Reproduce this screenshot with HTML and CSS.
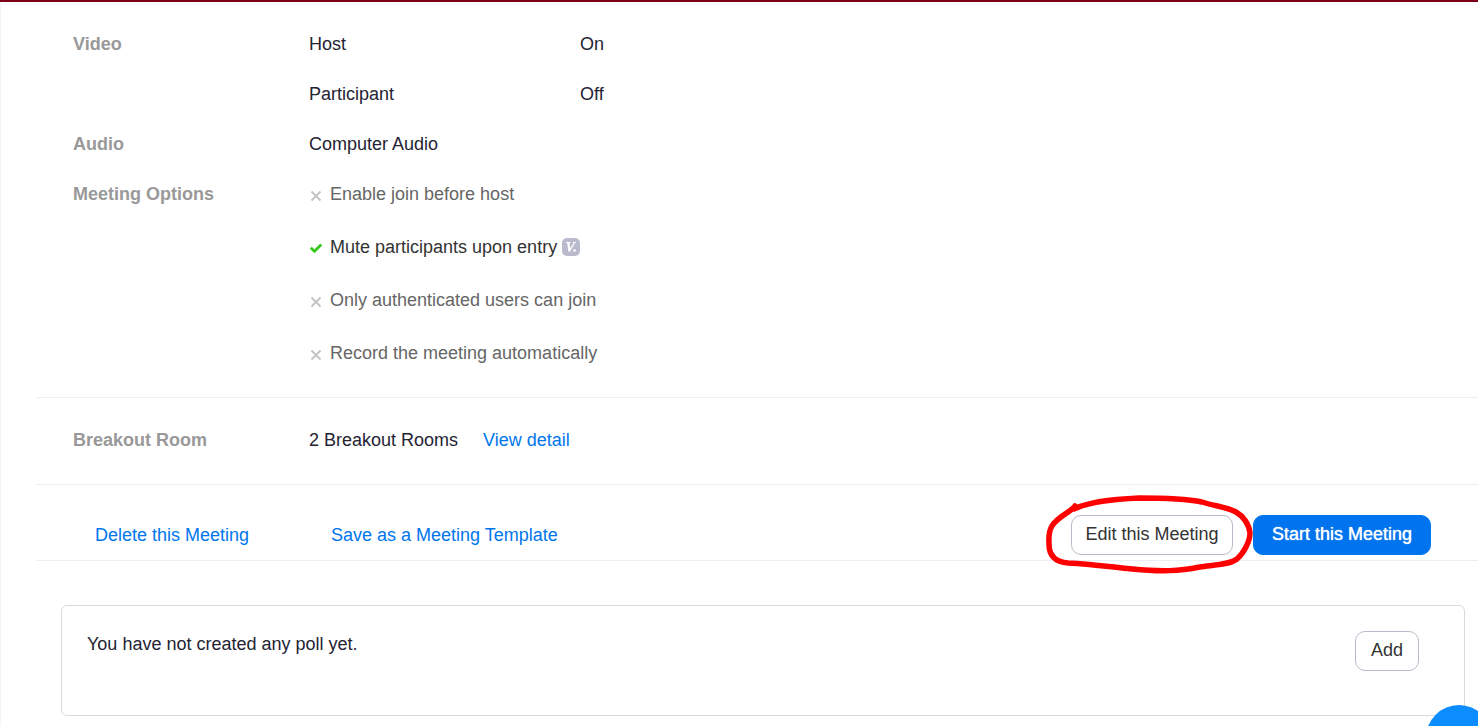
FILE: index.html
```html
<!DOCTYPE html>
<html lang="en">
<head>
<meta charset="utf-8">
<title>Meeting details</title>
<link rel="stylesheet" href="styles.css">
</head>
<body>
<svg class="sprite" aria-hidden="true">
  <symbol id="cross" viewBox="0 0 12 12"><path d="M1.500 1.500 10.500 10.500M10.500 1.500 1.500 10.500" fill="none" stroke="#c4c4c4" stroke-width="1.900"/></symbol>
</svg>
<main class="page">
  <section class="section details">
    <div class="row">
      <h2 class="label">Video</h2>
      <dl class="pairs">
        <dt>Host</dt><dd>On</dd>
        <dt>Participant</dt><dd>Off</dd>
      </dl>
    </div>
    <div class="row">
      <h2 class="label">Audio</h2>
      <p class="value">Computer Audio</p>
    </div>
    <div class="row">
      <h2 class="label">Meeting Options</h2>
      <ul class="options">
        <li class="option"><svg class="mark"><use href="#cross"/></svg>Enable join before host</li>
        <li class="option option-on"><svg class="mark" viewBox="0 0 12 12"><path d="M.8 4.800 4.500 8.300 11.300 1.500" fill="none" stroke="#35c91d" stroke-width="2.800"/></svg>Mute participants upon entry
          <svg class="badge" viewBox="0 0 18 18"><rect width="18" height="18" rx="5" fill="#babacf"/><path d="M4 4.500H8.500M11 4.500H14" fill="none" stroke="#fff" stroke-width="1.200"/><path d="M5.200 4.500H7.600L8 10.500 12 4.500H13.200L8 13.500H6.300Z" fill="#fff"/><circle cx="12.500" cy="12.500" r="1.300" fill="#fff"/></svg></li>
        <li class="option"><svg class="mark"><use href="#cross"/></svg>Only authenticated users can join</li>
        <li class="option"><svg class="mark"><use href="#cross"/></svg>Record the meeting automatically</li>
      </ul>
    </div>
  </section>
  <section class="section">
    <div class="row">
      <h2 class="label">Breakout Room</h2>
      <p class="value">2 Breakout Rooms <a class="detail" href="#">View detail</a></p>
    </div>
  </section>
  <section class="section actions">
    <a class="delete" href="#">Delete this Meeting</a>
    <a href="#">Save as a Meeting Template</a>
    <div class="buttons">
      <div class="circled">
        <button class="button edit" type="button">Edit this Meeting</button>
        <svg class="scribble" viewBox="0 0 220 90" aria-hidden="true"><path d="M35 16C31 22 17 27 12 36C8 42 9 48 9 54C9 65 15 72 28 73C48 74 73 77 92 79C123 82 139 81 160 77C173 75 189 75 197 69C204 63 210 51 210 43C209 34 203 26 196 22C187 17 174 16 162 12C142 8 119 8 99 8C76 9 50 11 34 19" fill="none" stroke="#fe0000" stroke-width="5.500" stroke-linecap="round" stroke-linejoin="round"/></svg>
      </div>
      <button class="button start" type="button">Start this Meeting</button>
    </div>
  </section>
  <section class="poll">
    <p class="poll-text">You have not created any poll yet.</p>
    <button class="button" type="button">Add</button>
  </section>
</main>
<button class="help" type="button" aria-label="Help"></button>
</body>
</html>
```
FILE: styles.css
```css
* {
  box-sizing: border-box;
}

body {
  margin: 0;
  border-top: 2px solid #7b0018;
  background: #fff;
  color: #232333;
  font: 18px/20px "Liberation Sans", Arial, sans-serif;
}

h2, p, dl, dd, ul {
  margin: 0;
  padding: 0;
}

a {
  color: #0076ee;
  text-decoration: none;
}

.sprite {
  display: none;
}

.page {
  padding: 0 0 10px 35px;
  border-left: 1px solid #f4f4f6;
}

.section {
  padding: 32px 0 34px 37px;
  border-bottom: 1px solid #ededf4;
}

.details {
  display: flex;
  flex-direction: column;
  gap: 30px;
}

.row {
  display: grid;
  grid-template-columns: 236px 1fr;
}

.label {
  color: #999;
  font-size: 18px;
  font-weight: bold;
}

.pairs {
  display: grid;
  grid-template-columns: 271px 1fr;
  row-gap: 30px;
}

.options {
  display: flex;
  flex-direction: column;
  gap: 33px;
  list-style: none;
}

.option {
  display: flex;
  align-items: center;
  color: #666;
}

.option-on {
  color: #333;
}

.mark {
  width: 12px;
  height: 12px;
  margin: 3px 8px 0 1px;
}

.badge {
  width: 18px;
  height: 18px;
  margin-left: 5px;
}

.detail {
  margin-left: 20px;
}

.actions {
  display: flex;
  align-items: center;
  padding: 30px 47px 5px 59px;
}

.delete {
  width: 236px;
}

.buttons {
  display: flex;
  gap: 20px;
  margin-left: auto;
}

.button {
  height: 40px;
  min-width: 64px;
  padding: 0 12px 2px;
  border: 1px solid #babacc;
  border-radius: 10px;
  background: #fff;
  color: #333;
  font: inherit;
}

.edit {
  min-width: 162px;
}

.start {
  min-width: 178px;
  border-color: #0074ee;
  background: #0074ee;
  color: #fff;
  text-shadow: 0 0 1px #fff;
}

.circled {
  position: relative;
}

.scribble {
  position: absolute;
  top: -25px;
  left: -31px;
  width: 220px;
  height: 90px;
  pointer-events: none;
}

.poll {
  display: flex;
  align-items: flex-start;
  justify-content: space-between;
  margin: 44px 13px 0 25px;
  padding: 25px 45px 44px 25px;
  border: 1px solid #dadada;
  border-radius: 6px;
}

.poll-text {
  line-height: 26px;
}

.help {
  position: fixed;
  right: -14px;
  bottom: -45px;
  width: 66px;
  height: 66px;
  border: 0;
  border-radius: 50%;
  background: #0b8cff;
}
```
